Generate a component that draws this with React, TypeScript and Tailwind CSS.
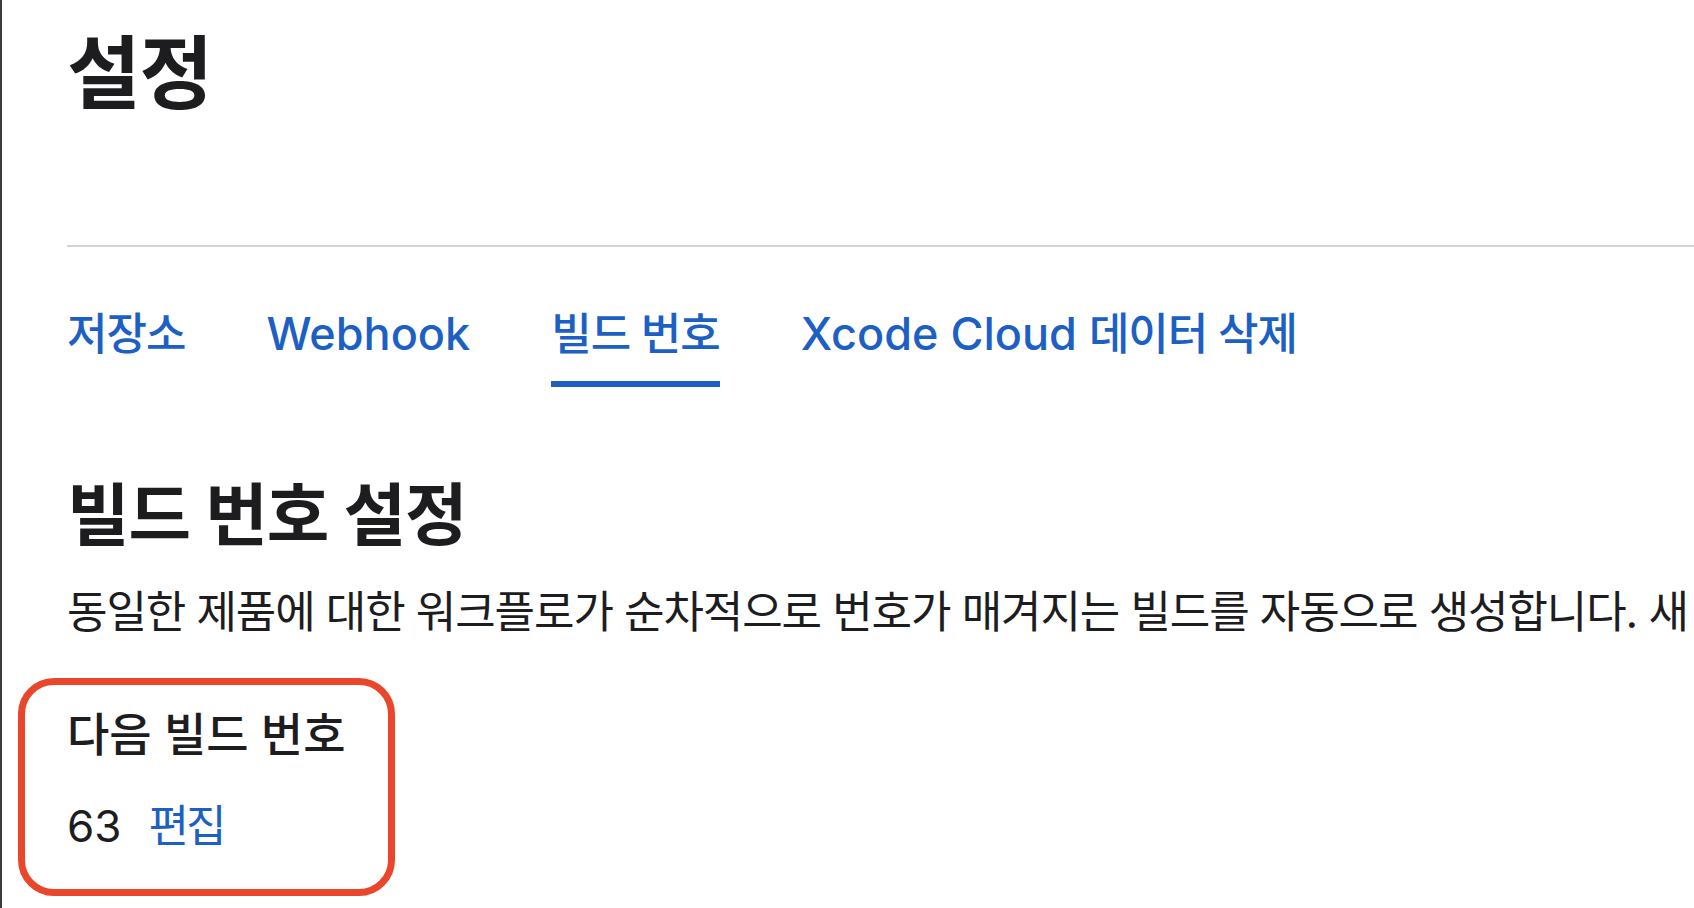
import React from "react";

const FONT = { fontFamily: '"Inter", "Noto Sans CJK KR", sans-serif' };

function Tab({ children, active }: { children: React.ReactNode; active?: boolean }) {
  return (
    <div className="flex flex-col items-stretch">
      <div className="text-[45px] leading-none font-medium text-[#1d60c3] whitespace-nowrap">{children}</div>
      {active ? <div className="mt-[25px] h-[6px] bg-[#1d60c3]" /> : <div className="mt-[25px] h-[6px]" />}
    </div>
  );
}

export default function App() {
  return (
    <div
      className="w-[1694px] h-[908px] overflow-hidden bg-white border-l-2 border-[#3a3a3a] pl-[65px] pt-[33px] text-[#1d1d1f]"
      style={FONT}
    >
      <h1 className="text-[80px] leading-none font-bold tracking-[-1px]">설정</h1>

      <div className="mt-[132px] h-[2px] bg-[#d4d4d8] mr-[-40px]" />

      <div className="mt-[64px] flex items-start gap-[81px]">
        <Tab>
          <span className="text-[44px] tracking-[-1px]">저장소</span>
        </Tab>
        <Tab>Webhook</Tab>
        <Tab active>
          <span className="text-[44px] tracking-[-1px]">빌드 번호</span>
        </Tab>
        <Tab>
          Xcode Cloud <span className="text-[44px] tracking-[-1px]">데이터 삭제</span>
        </Tab>
      </div>

      <h2 className="mt-[94px] text-[68px] leading-none font-bold tracking-[-1px]">빌드 번호 설정</h2>

      <p className="mt-[41px] text-[44px] leading-none tracking-[-1.1px] whitespace-nowrap text-[#1d1d1f]">
        동일한 제품에 대한 워크플로가 순차적으로 번호가 매겨지는 빌드를 자동으로 생성합니다. 새
      </p>

      <div className="mt-[44px] ml-[-49px] w-[377px] border-[7px] border-[#e9462b] rounded-[36px] pl-[42px] pt-[26px] pb-[41px]">
        <div className="text-[46px] leading-none font-medium whitespace-nowrap">다음 빌드 번호</div>
        <div className="mt-[47px] flex items-baseline gap-[27px] text-[44px] leading-none whitespace-nowrap">
          <span>63</span>
          <button className="text-[44px] leading-none tracking-[-3px] text-[#1d60c3]">편집</button>
        </div>
      </div>
    </div>
  );
}
